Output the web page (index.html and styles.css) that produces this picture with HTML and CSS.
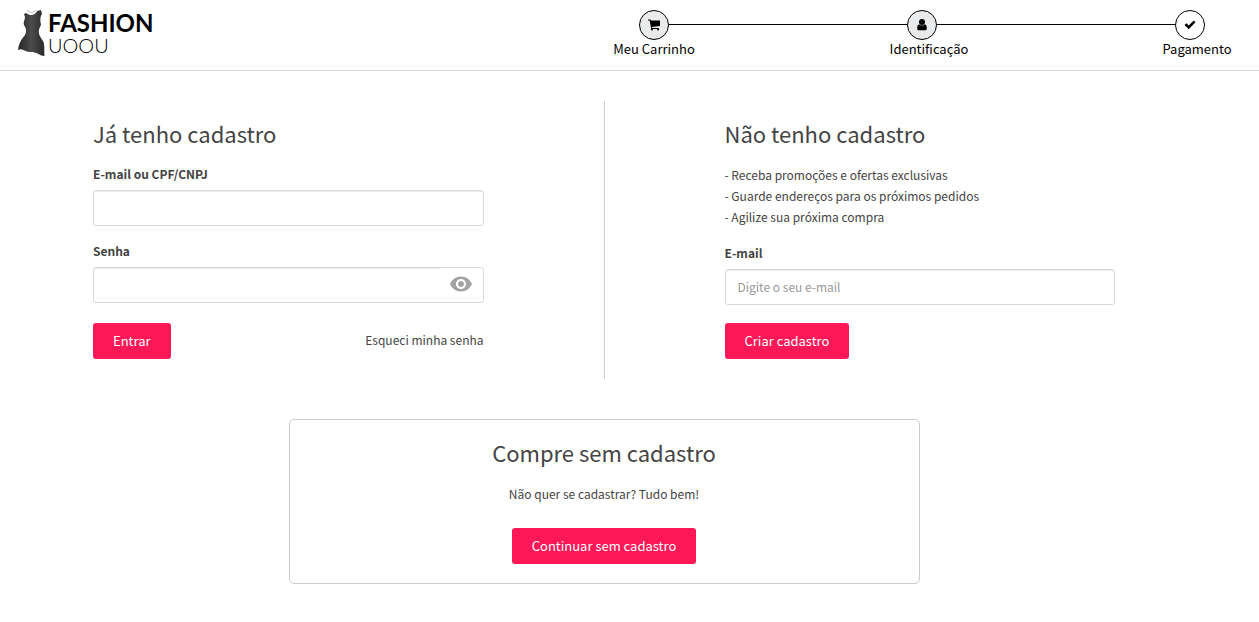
FILE: index.html
```html
<!DOCTYPE html>
<html lang="pt-br">
<head>
    <meta charset="UTF-8">
    <meta name="viewport" content="width=device-width, initial-scale=1.0">
    <title>Identificação - Fashion Uoou</title>
    <link rel="stylesheet" href="styles.css">
</head>
<body>
    <header class="header">
        <a class="logo" href="#">
            <svg class="logo-dress" viewBox="0 0 28 48" aria-hidden="true">
                <defs>
                    <linearGradient id="dress" x1="0" x2="1">
                        <stop offset="0" stop-color="#262626"/>
                        <stop offset="0.5" stop-color="#4c4c4c"/>
                        <stop offset="1" stop-color="#292929"/>
                    </linearGradient>
                </defs>
                <path fill="url(#dress)" d="M6 5 L8 4 C12 7 17 7 19 2 L23 1 L24 5 C21 9 23 14 23 16 C19 23 21 26 25 32 C27 36 26 41 26.500 47 C22 47 19 43 14 43 C8 44 4 38 0 41 C1 34 3 31 7 26 C9 22 8 19 6 16 C5 13 7 11 7 8 Z"/>
                <path fill="none" stroke="#bbb" d="M9 1 C11 4 16 4 18 1"/>
            </svg>
            <span class="logo-name">
                <span class="logo-top">FASHION</span>
                <span class="logo-bottom">UOOU</span>
            </span>
        </a>

        <ol class="steps">
            <li class="step active">
                <span class="step-icon">
                    <svg width="14" height="14" viewBox="0 0 14 14" aria-hidden="true">
                        <path d="M1 1.500h2.500l.4 1H13v5.500L4.900 9l.2 1H12v1H4.200L2.700 2.500H1z"/>
                        <circle cx="5" cy="11.500" r="1"/>
                        <circle cx="11" cy="11.500" r="1"/>
                    </svg>
                </span>
                <span class="step-label">Meu Carrinho</span>
            </li>
            <li class="step active">
                <span class="step-icon">
                    <svg width="14" height="14" viewBox="0 0 14 14" aria-hidden="true">
                        <circle cx="7" cy="4" r="3"/>
                        <path d="M4.300 6.200C5.500 7.800 8.500 7.800 9.700 6.200C11.300 6.500 12 8.500 11.800 10.700C11.700 11.800 11 12.300 10.200 12.300H3.800C3 12.300 2.300 11.800 2.200 10.700C2 8.500 2.700 6.500 4.300 6.200z"/>
                    </svg>
                </span>
                <span class="step-label">Identificação</span>
            </li>
            <li class="step">
                <span class="step-icon">
                    <svg width="14" height="14" viewBox="0 0 14 14" aria-hidden="true">
                        <path d="M1.500 7L3.400 5.200L5.700 7.500L10.700 2.500L12.500 4.300L5.700 11.200z"/>
                    </svg>
                </span>
                <span class="step-label">Pagamento</span>
            </li>
        </ol>
    </header>

    <main class="content">
        <div class="columns">
            <form class="box">
                <h2>Já tenho cadastro</h2>
                <div class="form-group">
                    <label for="login">E-mail ou CPF/CNPJ</label>
                    <input type="text" id="login" name="login">
                </div>
                <div class="form-group">
                    <label for="password">Senha</label>
                    <div class="password">
                        <input type="password" id="password" name="password">
                        <button type="button" class="show-password" id="showPassword" aria-label="Mostrar senha">
                            <svg width="24" height="24" viewBox="0 0 24 24" aria-hidden="true">
                                <path d="M12 4.500C7 4.500 2.730 7.610 1 12c1.730 4.390 6 7.500 11 7.500s9.270-3.110 11-7.500c-1.730-4.390-6-7.500-11-7.500zM12 17c-2.760 0-5-2.240-5-5s2.240-5 5-5 5 2.240 5 5-2.240 5-5 5zm0-8c-1.660 0-3 1.340-3 3s1.340 3 3 3 3-1.340 3-3-1.340-3-3-3z"/>
                            </svg>
                        </button>
                    </div>
                </div>
                <div class="form-actions">
                    <button type="submit" class="btn">Entrar</button>
                    <a href="#" class="forgot">Esqueci minha senha</a>
                </div>
            </form>

            <div class="divider"></div>

            <form class="box">
                <h2>Não tenho cadastro</h2>
                <ul class="benefits">
                    <li>- Receba promoções e ofertas exclusivas</li>
                    <li>- Guarde endereços para os próximos pedidos</li>
                    <li>- Agilize sua próxima compra</li>
                </ul>
                <div class="form-group">
                    <label for="email">E-mail</label>
                    <input type="email" id="email" name="email" placeholder="Digite o seu e-mail">
                </div>
                <div class="form-actions">
                    <button type="submit" class="btn">Criar cadastro</button>
                </div>
            </form>
        </div>

        <section class="guest">
            <h2>Compre sem cadastro</h2>
            <p>Não quer se cadastrar? Tudo bem!</p>
            <button type="button" class="btn">Continuar sem cadastro</button>
        </section>
    </main>

    <script src="script.js"></script>
</body>
</html>
```

FILE: styles.css
```css
* {
    margin: 0;
    padding: 0;
    box-sizing: border-box;
}

body {
    font-family: 'Noto Sans CJK JP', 'Noto Sans', sans-serif;
    font-size: 12px;
    line-height: 21px;
    color: #444;
    background: #fff;
}

a {
    color: inherit;
    text-decoration: none;
}

ol,
ul {
    list-style: none;
}

/* Header */
.header {
    display: flex;
    justify-content: space-between;
    align-items: flex-start;
    padding: 9px 29px 12px 18px;
    border-bottom: 1px solid #d9d9d9;
}

.logo {
    display: flex;
    gap: 2px;
    color: #000;
}

.logo-dress {
    width: 28px;
    height: 48px;
}

.logo-name {
    display: flex;
    flex-direction: column;
    padding-top: 2px;
    font-family: Lato, sans-serif;
}

.logo-top {
    font-size: 24px;
    font-weight: 700;
    line-height: 24px;
}

.logo-bottom {
    font-size: 20px;
    font-weight: 300;
    line-height: 20px;
}

.steps {
    position: relative;
    display: flex;
    flex: 0 1 616px;
    justify-content: space-between;
}

.steps::before {
    content: '';
    position: absolute;
    top: 15px;
    left: 40px;
    right: 40px;
    border-top: 1px solid #000;
}

.step {
    position: relative;
    display: flex;
    flex-direction: column;
    align-items: center;
    width: 80px;
    color: #000;
}

.step-icon {
    display: flex;
    align-items: center;
    justify-content: center;
    width: 30px;
    height: 30px;
    margin-top: 1px;
    border: 1px solid #000;
    border-radius: 50%;
    background: #fff;
}

.step.active .step-icon {
    background: #e9eaeb;
}

.step-label {
    font-size: 13px;
    line-height: 18px;
    white-space: nowrap;
}

.step + .step .step-label {
    margin-left: 14px;
}

/* Content */
.content {
    padding: 30px 144px 38px 93px;
}

.columns {
    display: grid;
    grid-template-columns: 1fr 1px 1fr;
    gap: 120px;
    margin-bottom: 40px;
}

.divider {
    background: #ccc;
}

.box {
    display: flex;
    flex-direction: column;
    padding: 20px 0;
}

h2 {
    margin-bottom: 19px;
    font-size: 22px;
    font-weight: 400;
    line-height: 24px;
}

.form-group {
    margin-bottom: 15px;
}

label {
    display: block;
    margin-bottom: 6px;
    font-weight: 700;
    line-height: 20px;
}

input {
    display: block;
    width: 100%;
    height: 36px;
    padding: 0 12px 2px;
    border: 1px solid #d9d9d9;
    border-radius: 3px;
    background: #fff;
    box-shadow: inset 0 1px 1px rgba(0, 0, 0, 0.08);
    font: inherit;
    color: #444;
}

input::placeholder {
    color: #999;
}

.password {
    position: relative;
}

.show-password {
    position: absolute;
    top: 1px;
    right: 1px;
    bottom: 1px;
    display: flex;
    align-items: center;
    justify-content: center;
    width: 44px;
    padding-bottom: 2px;
    border: none;
    border-radius: 3px;
    background: #fff;
    cursor: pointer;
}

.show-password svg {
    fill: #a3a3a3;
}

.form-actions {
    display: flex;
    justify-content: space-between;
    align-items: center;
    margin-top: auto;
    padding-top: 3px;
}

.btn {
    height: 36px;
    padding: 0 20px 2px;
    border: none;
    border-radius: 3px;
    background: #ff1857;
    font: inherit;
    font-size: 13px;
    color: #fff;
    cursor: pointer;
}

.forgot {
    padding-bottom: 4px;
}

.benefits {
    margin-bottom: 16px;
}

.guest {
    max-width: 631px;
    margin: 0 auto;
    padding: 20px 20px 19px;
    border: 1px solid #ccc;
    border-radius: 5px;
    text-align: center;
}

.guest p {
    margin-bottom: 24px;
}
```

FILE: script.js
```js
const passwordInput = document.getElementById('password');
const showPassword = document.getElementById('showPassword');

showPassword.addEventListener('click', () => {
    passwordInput.type = passwordInput.type === 'password' ? 'text' : 'password';
});
```
